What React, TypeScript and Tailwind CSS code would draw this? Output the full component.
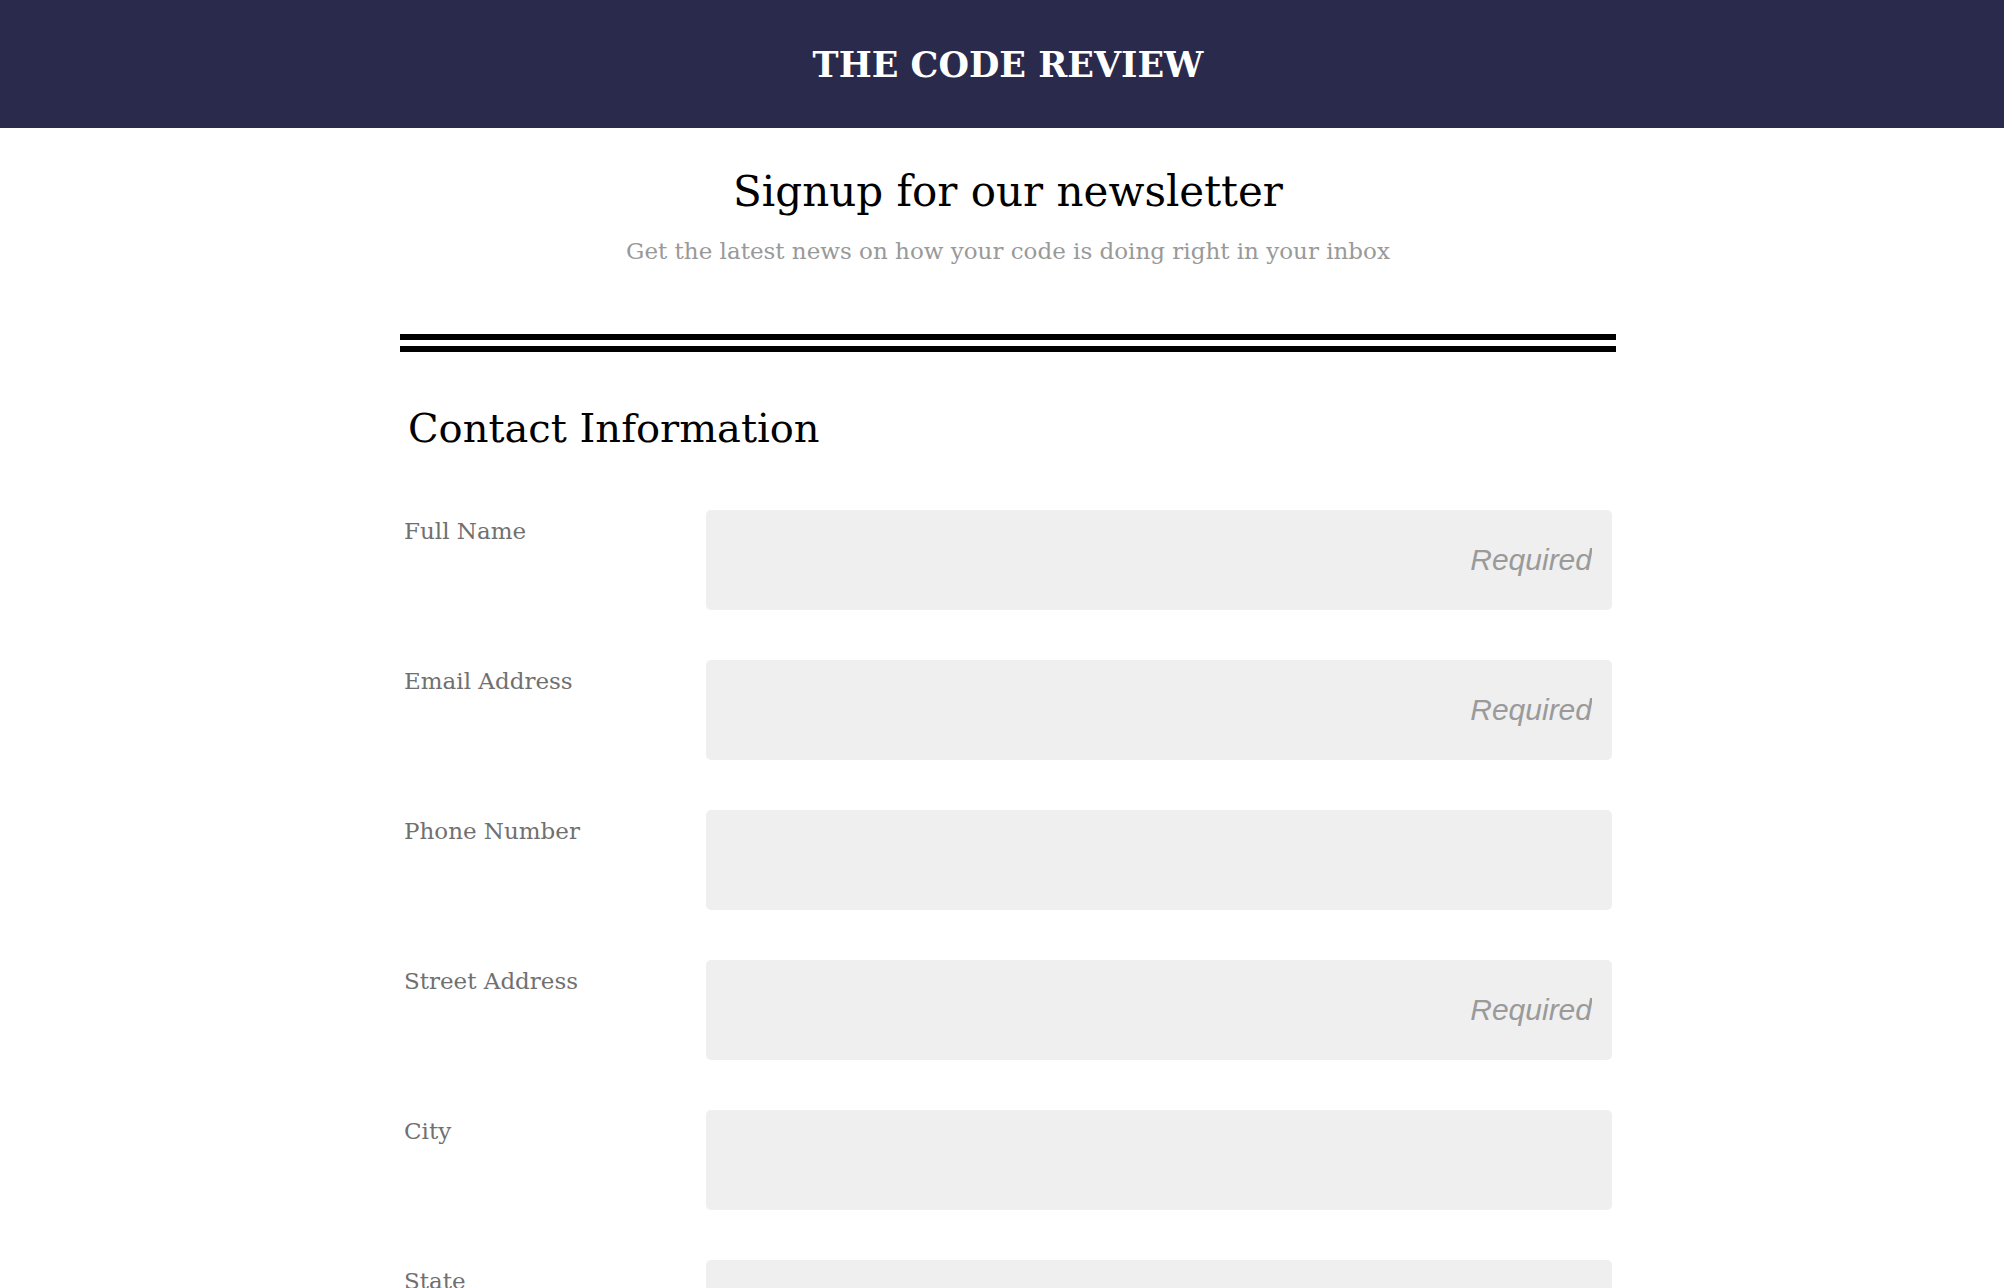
import * as React from 'react'

const fields = [
  { label: 'Full Name', required: true },
  { label: 'Email Address', required: true },
  { label: 'Phone Number', required: false },
  { label: 'Street Address', required: true },
  { label: 'City', required: false },
  { label: 'State', required: false },
  { label: 'Zip Code', required: true },
]

export default function App() {
  return (
    <div className="min-h-screen bg-white font-['DejaVu_Serif',serif]">
      <header className="flex h-[128px] items-center justify-center bg-[#2a2a4c] pl-3">
        <h1 className="text-[35px] font-bold leading-none text-white">THE CODE REVIEW</h1>
      </header>

      <main className="pl-3 pb-24">
        <div className="mx-auto w-[1216px]">
          <div className="pt-[43px] text-center">
            <h2 className="text-[42px] leading-none text-black">Signup for our newsletter</h2>
            <p className="mt-[27px] text-[23px] leading-none text-[#999]">
              Get the latest news on how your code is doing right in your inbox
            </p>
          </div>

          <div className="mt-[71px] border-t-[18px] border-double border-black" />

          <form className="px-1">
            <h3 className="mt-[56px] px-1 text-[40px] leading-none text-black">Contact Information</h3>

            <div className="mt-[62px] flex flex-col gap-[50px]">
              {fields.map((f) => (
                <div key={f.label} className="flex">
                  <label className="w-1/4 pt-[10px] text-[23px] leading-none text-[#707070]">
                    {f.label}
                  </label>
                  <input
                    type="text"
                    placeholder={f.required ? 'Required' : ''}
                    className="h-[100px] w-3/4 rounded-[5px] bg-[#efefef] px-5 text-right font-['Liberation_Sans',sans-serif] text-[30px] italic text-[#333] outline-none placeholder:text-[#9a9a9a]"
                  />
                </div>
              ))}
            </div>
          </form>
        </div>
      </main>
    </div>
  )
}
